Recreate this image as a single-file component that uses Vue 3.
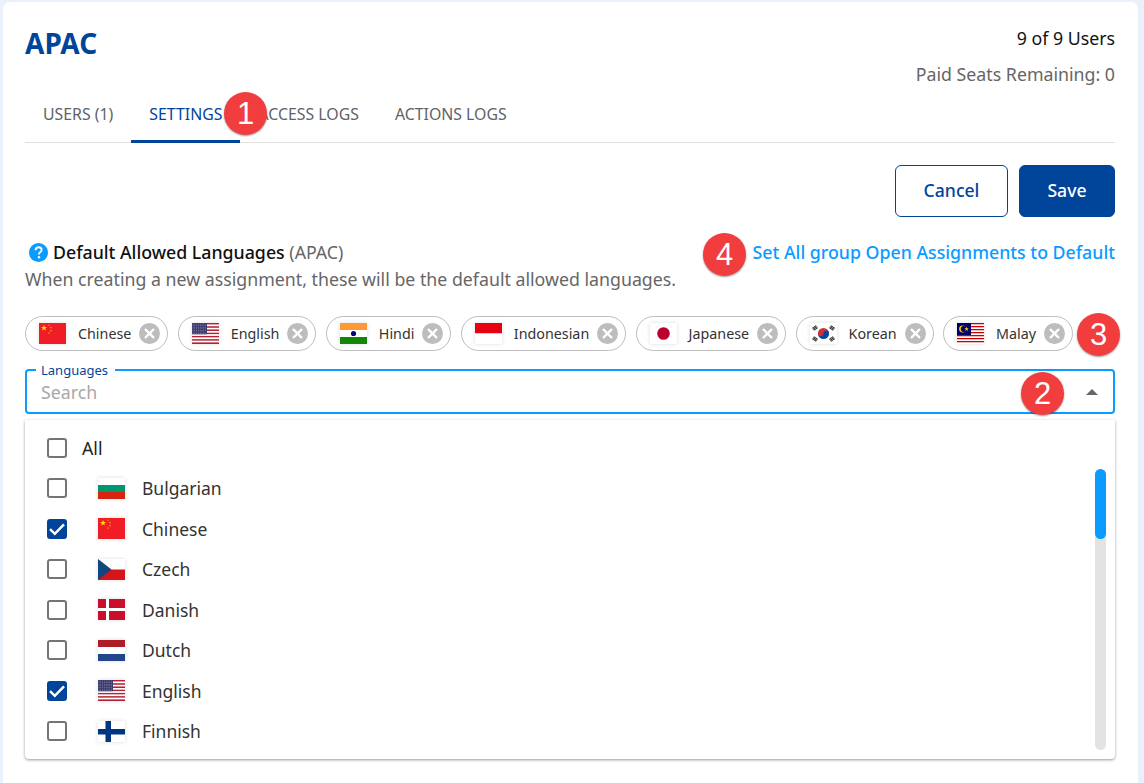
<script setup>
const W = 27
const H = 21
const r = (x, y, width, height, fill) => ({ t: 'rect', a: { x, y, width, height, fill } })
const c = (cx, cy, rad, fill) => ({ t: 'circle', a: { cx, cy, r: rad, fill } })
const p = (d, fill) => ({ t: 'path', a: { d, fill } })
const star = (cx, cy, o, fill) => {
  const pts = []
  for (let i = 0; i < 10; i++) {
    const rad = i % 2 ? o * 0.4 : o
    const a = -Math.PI / 2 + (i * Math.PI) / 5
    pts.push(`${(cx + rad * Math.cos(a)).toFixed(2)},${(cy + rad * Math.sin(a)).toFixed(2)}`)
  }
  return { t: 'polygon', a: { points: pts.join(' '), fill } }
}
const stripes = (n, a, b) => {
  const out = []
  const h = H / n
  for (let i = 0; i < n; i++) out.push(r(0, i * h, W, h + 0.05, i % 2 ? b : a))
  return out
}
const usDots = () => {
  const out = []
  for (let y = 1; y < 11; y += 1.6) for (let x = 1; x < 15; x += 1.8) out.push(c(x, y, 0.35, '#c9cfe0'))
  return out
}
const trigram = (x, y, deg) => ({
  t: 'g',
  a: { innerHTML: '<rect x="-2.4" y="-1.8" width="4.8" height="1" fill="#222"/><rect x="-2.4" y="-.5" width="4.8" height="1" fill="#222"/><rect x="-2.4" y=".8" width="4.8" height="1" fill="#222"/>', transform: `translate(${x} ${y}) rotate(${deg})` }
})

const flags = {
  bg: [r(0, 0, W, 7, '#ffffff'), r(0, 7, W, 7, '#00966e'), r(0, 14, W, 7, '#d62612')],
  cn: [r(0, 0, W, H, '#f11d26'), star(5, 5, 3.2, '#ffde00'), star(10, 2.2, 1, '#ffde00'), star(12, 4.6, 1, '#ffde00'), star(12, 7.6, 1, '#ffde00'), star(10, 10, 1, '#ffde00')],
  cz: [r(0, 0, W, 10.5, '#ffffff'), r(0, 10.5, W, 10.5, '#d7141a'), p('M0 0L13.5 10.5L0 21Z', '#11457e')],
  dk: [r(0, 0, W, H, '#c8102e'), r(8, 0, 3, H, '#ffffff'), r(0, 9, W, 3, '#ffffff')],
  nl: [r(0, 0, W, 7, '#ae1c28'), r(0, 7, W, 7, '#ffffff'), r(0, 14, W, 7, '#21468b')],
  us: [...stripes(13, '#b22234', '#ffffff'), r(0, 0, 15, 11.3, '#3c3b6e'), ...usDots()],
  fi: [r(0, 0, W, H, '#ffffff'), r(7.5, 0, 5.5, H, '#003580'), r(0, 8, W, 5.5, '#003580')],
  in: [r(0, 0, W, 7, '#ff9933'), r(0, 7, W, 7, '#ffffff'), r(0, 14, W, 7, '#138808'), c(13.5, 10.5, 2.6, '#000080')],
  id: [r(0, 0, W, 10.5, '#e70011'), r(0, 10.5, W, 10.5, '#ffffff')],
  jp: [r(0, 0, W, H, '#ffffff'), c(13.5, 10.5, 6.3, '#bc002d')],
  kr: [r(0, 0, W, H, '#ffffff'), p('M8 10.5a5.5 5.5 0 0 1 11 0Z', '#cd2e3a'), p('M8 10.5a5.5 5.5 0 0 0 11 0Z', '#0047a0'), c(10.75, 10.5, 2.75, '#cd2e3a'), c(16.25, 10.5, 2.75, '#0047a0'), trigram(5, 5, -35), trigram(22, 5, 35), trigram(5, 16, 35), trigram(22, 16, -35)],
  my: [...stripes(14, '#cc0001', '#ffffff'), r(0, 0, 14, 12, '#010066'), c(5.5, 6, 3.4, '#ffcc00'), c(6.7, 6, 2.9, '#010066'), star(9.6, 6, 2.4, '#ffcc00')]
}

const chips = [
  { name: 'Chinese', flag: 'cn' },
  { name: 'English', flag: 'us' },
  { name: 'Hindi', flag: 'in' },
  { name: 'Indonesian', flag: 'id' },
  { name: 'Japanese', flag: 'jp' },
  { name: 'Korean', flag: 'kr' },
  { name: 'Malay', flag: 'my' }
]
const options = [
  { name: 'Bulgarian', flag: 'bg', on: false },
  { name: 'Chinese', flag: 'cn', on: true },
  { name: 'Czech', flag: 'cz', on: false },
  { name: 'Danish', flag: 'dk', on: false },
  { name: 'Dutch', flag: 'nl', on: false },
  { name: 'English', flag: 'us', on: true },
  { name: 'Finnish', flag: 'fi', on: false }
]
const tabs = ['USERS (1)', 'SETTINGS', 'ACCESS LOGS', 'ACTIONS LOGS']
</script>

<template>
  <div class="page">
    <main class="card">
      <header class="head">
        <h1 class="title">APAC</h1>
        <div class="seats">
          <div class="users">9 of 9 Users</div>
          <div class="paid">Paid Seats Remaining: 0</div>
        </div>
      </header>

      <nav class="tabs">
        <div v-for="t in tabs" :key="t" class="tab" :class="{ active: t === 'SETTINGS' }">{{ t }}</div>
      </nav>

      <div class="actions">
        <button class="btn outline">Cancel</button>
        <button class="btn solid">Save</button>
      </div>

      <section class="info">
        <div>
          <div class="info-title">
            <svg class="help" viewBox="0 0 20 20">
              <circle cx="10" cy="10" r="10" fill="#0a9bff" />
              <path d="M6.9 7.6c.1-2 1.5-3.2 3.3-3.2 1.8 0 3.1 1.1 3.1 2.7 0 1.2-.6 1.9-1.6 2.6-.9.6-1.2 1-1.2 1.9v.4" fill="none" stroke="#fff" stroke-width="2" />
              <circle cx="10.5" cy="14.9" r="1.3" fill="#fff" />
            </svg>
            <span class="strong">Default Allowed Languages</span>
            <span class="muted">&nbsp;(APAC)</span>
          </div>
          <div class="info-sub">When creating a new assignment, these will be the default allowed languages.</div>
        </div>
        <a class="link">Set All group Open Assignments to Default</a>
      </section>

      <div class="chips">
        <div v-for="ch in chips" :key="ch.name" class="chip">
          <svg class="flag" :viewBox="`0 0 ${W} ${H}`">
            <component :is="s.t" v-for="(s, i) in flags[ch.flag]" :key="i" v-bind="s.a" />
          </svg>
          <span class="chip-name">{{ ch.name }}</span>
          <svg class="chip-x" viewBox="0 0 21 21">
            <circle cx="10.5" cy="10.5" r="10.5" fill="#bdbdbd" />
            <path d="M6.6 6.6l7.8 7.8M14.4 6.6l-7.8 7.8" stroke="#fff" stroke-width="2.2" stroke-linecap="round" />
          </svg>
        </div>
      </div>

      <div class="field">
        <span class="field-label">Languages</span>
        <span class="placeholder">Search</span>
        <span class="caret"></span>
      </div>

      <div class="menu">
        <div class="row">
          <span class="box"></span>
          <span class="all-label">All</span>
        </div>
        <div v-for="o in options" :key="o.name" class="row">
          <span class="box" :class="{ on: o.on }">
            <svg v-if="o.on" viewBox="0 0 20 20" class="tick">
              <path d="M3 10.2l4.8 4.6L17 5.4" fill="none" stroke="#fff" stroke-width="2.5" />
            </svg>
          </span>
          <svg class="flag list-flag" :viewBox="`0 0 ${W} ${H}`">
            <component :is="s.t" v-for="(s, i) in flags[o.flag]" :key="i" v-bind="s.a" />
          </svg>
          <span class="opt">{{ o.name }}</span>
        </div>
        <div class="track"><div class="thumb"></div></div>
      </div>
    </main>

    <span class="badge b1">1</span>
    <span class="badge b2">2</span>
    <span class="badge b3">3</span>
    <span class="badge b4">4</span>
  </div>
</template>

<style scoped>
.page {
  position: relative;
  height: 783px;
  overflow: hidden;
  background: #ebf1fa;
  font-family: "Noto Sans", sans-serif;
  font-size: 17.75px;
  color: #222;
}
.card {
  margin: 2px 6px 0 3px;
  height: 781px;
  box-sizing: border-box;
  padding: 0 23px 0 22px;
  background: #fff;
  border-radius: 7px 7px 0 0;
}
.head {
  display: flex;
  justify-content: space-between;
  height: 84px;
}
.title {
  margin: 23px 0 0;
  font-size: 28px;
  line-height: 36px;
  font-weight: 700;
  color: #00459a;
}
.seats {
  text-align: right;
}
.users {
  margin-top: 24px;
  line-height: 24px;
  color: #111;
}
.paid {
  margin-top: 12px;
  line-height: 24px;
  color: #666;
}
.tabs {
  display: flex;
  height: 57px;
  box-sizing: border-box;
  border-bottom: 1px solid #e0e0e0;
}
.tab {
  padding: 0 18px;
  height: 57px;
  box-sizing: border-box;
  line-height: 56px;
  font-size: 15.85px;
  color: #5f6368;
}
.tab.active {
  color: #00459a;
  border-bottom: 3px solid #00459a;
}
.actions {
  display: flex;
  justify-content: flex-end;
  gap: 11px;
  margin-top: 22px;
}
.btn {
  height: 52px;
  padding: 0 0 2px;
  border-radius: 6px;
  font-family: inherit;
  font-size: 17.6px;
  font-weight: 500;
  cursor: pointer;
}
.outline {
  width: 113px;
  background: #fff;
  color: #00459a;
  border: 1px solid #00459a;
}
.solid {
  width: 96px;
  background: #00459a;
  color: #fff;
  border: 1px solid #00459a;
}
.info {
  display: flex;
  justify-content: space-between;
  align-items: flex-start;
  margin-top: 21px;
}
.info-title {
  display: flex;
  align-items: center;
  padding-left: 4px;
  height: 28px;
}
.help {
  width: 19px;
  height: 19px;
  margin-right: 5px;
}
.strong {
  color: #111;
  font-weight: 500;
}
.muted {
  color: #666;
}
.info-sub {
  line-height: 26px;
  color: #666;
}
.link {
  line-height: 28px;
  color: #0a9bff;
  font-weight: 500;
}
.chips {
  display: flex;
  gap: 9.4px;
  margin-top: 24px;
}
.chip {
  display: flex;
  align-items: center;
  height: 35px;
  box-sizing: border-box;
  padding: 0 7px 0 13px;
  border: 1px solid #bdbdbd;
  border-radius: 18px;
  font-size: 14.3px;
  color: #333;
}
.flag {
  width: 27px;
  height: 21px;
  flex: none;
  box-shadow: 0 0 4px rgba(0, 0, 0, 0.14);
}
.chip-name {
  margin: 0 8px 0 12px;
}
.chip-x {
  width: 21px;
  height: 21px;
  flex: none;
}
.field {
  position: relative;
  display: flex;
  align-items: center;
  height: 45px;
  box-sizing: border-box;
  margin-top: 18px;
  padding: 0 14px;
  border: 2px solid #0a9bff;
  border-radius: 4px;
}
.field-label {
  position: absolute;
  left: 9px;
  top: -9px;
  padding: 0 7px 0 5px;
  background: #fff;
  font-size: 13px;
  line-height: 16px;
  color: #00459a;
}
.placeholder {
  color: #a8a8a8;
}
.caret {
  margin-left: auto;
  margin-right: 1px;
  width: 0;
  height: 0;
  border-left: 6px solid transparent;
  border-right: 6px solid transparent;
  border-bottom: 6px solid #666;
}
.menu {
  position: relative;
  height: 339px;
  box-sizing: border-box;
  margin-top: 6px;
  padding-top: 7.5px;
  background: #fff;
  border-radius: 0 0 4px 4px;
  box-shadow: 0 1px 3px rgba(0, 0, 0, 0.4);
  overflow: hidden;
}
.row {
  display: flex;
  align-items: center;
  height: 40.5px;
  padding-left: 22px;
}
.box {
  display: block;
  width: 20px;
  height: 20px;
  box-sizing: border-box;
  border: 2px solid #757575;
  border-radius: 3px;
  flex: none;
}
.box.on {
  background: #00459a;
  border-color: #00459a;
}
.tick {
  display: block;
  width: 20px;
  height: 20px;
  margin: -2px;
}
.all-label {
  margin-left: 15px;
  color: #222;
}
.list-flag {
  margin-left: 31px;
}
.opt {
  margin-left: 17px;
  font-size: 17.5px;
  color: #333;
}
.track {
  position: absolute;
  right: 9px;
  top: 49px;
  width: 11px;
  height: 281px;
  border-radius: 6px;
  background: #e3e3e3;
}
.thumb {
  height: 70px;
  border-radius: 6px;
  background: #0a9bff;
}
.badge {
  position: absolute;
  display: flex;
  align-items: center;
  justify-content: center;
  width: 43px;
  height: 43px;
  border-radius: 50%;
  background: #f23d3f;
  box-shadow: 0 1px 2px rgba(0, 0, 0, 0.4);
  color: #fff;
  font-family: "Liberation Sans", sans-serif;
  font-size: 31px;
}
.b1 { left: 224px; top: 92px; }
.b2 { left: 1021px; top: 372px; }
.b3 { left: 1077px; top: 313px; }
.b4 { left: 703px; top: 233px; }
</style>
